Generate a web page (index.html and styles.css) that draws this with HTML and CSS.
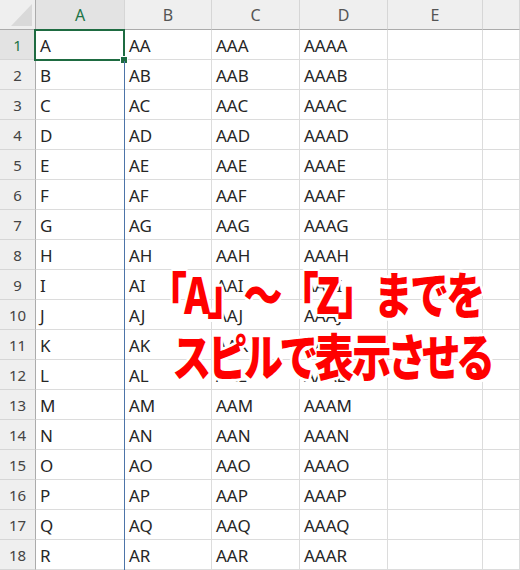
FILE: index.html
```html
<!DOCTYPE html>
<html lang="ja">
<head>
<meta charset="utf-8">
<link rel="stylesheet" href="styles.css">
</head>
<body>
<div class="sheet">
  <div class="grid">
    <div class="hd corner"><span class="tri"></span></div>
    <div class="hd col sel">A</div>
    <div class="hd col">B</div>
    <div class="hd col">C</div>
    <div class="hd col">D</div>
    <div class="hd col">E</div>
    <div class="hd col"></div>
  </div>
  <div class="grid" id="body"></div>
  <div class="selbox"><span class="handle"></span></div>
  <div class="spillline"></div>
  <div class="caption">
    <div class="line l1">「A」～「Z」までを</div>
    <div class="line l2">スピルで表示させる</div>
  </div>
</div>
<script>
  var body = document.getElementById('body');
  var letters = 'ABCDEFGHIJKLMNOPQR';
  var html = '';
  for (var i = 0; i < letters.length; i++) {
    var l = letters[i];
    html += '<div class="rh' + (i === 0 ? ' sel' : '') + '">' + (i + 1) + '</div>';
    html += '<div class="c">' + l + '</div>';
    html += '<div class="c">A' + l + '</div>';
    html += '<div class="c">AA' + l + '</div>';
    html += '<div class="c">AAA' + l + '</div>';
    html += '<div class="c"></div>';
    html += '<div class="c"></div>';
  }
  body.innerHTML = html;
</script>
</body>
</html>
```
FILE: styles.css
```css
html, body {
  margin: 0;
  padding: 0;
  background: #ffffff;
}
.sheet {
  position: relative;
  width: 520px;
  height: 570px;
  overflow: hidden;
  font-family: "Noto Sans", "Noto Sans CJK JP", sans-serif;
}
.grid {
  display: grid;
  grid-template-columns: 36px 89px 87px 88px 88px 95px 1fr;
  grid-auto-rows: 30px;
}
.hd {
  background: #efefef;
  border-right: 1px solid #d6d6d6;
  border-bottom: 1px solid #ababab;
  display: flex;
  align-items: center;
  justify-content: center;
  color: #555555;
  font-size: 16px;
}
.corner {
  position: relative;
  border-right-color: #ababab;
}
.tri {
  position: absolute;
  right: 3px;
  bottom: 3px;
  width: 0;
  height: 0;
  border-left: 21px solid transparent;
  border-bottom: 22px solid #d9d9d9;
}
.col.sel {
  color: #217346;
  background: #e3e3e3;
}
.rh {
  background: #efefef;
  border-right: 1px solid #ababab;
  border-bottom: 1px solid #d6d6d6;
  display: flex;
  align-items: center;
  justify-content: center;
  color: #444444;
  font-size: 15px;
}
.rh.sel {
  color: #217346;
  background: #e3e3e3;
}
.c {
  border-right: 1px solid #dcdcdc;
  border-bottom: 1px solid #dcdcdc;
  display: flex;
  align-items: center;
  padding-left: 4px;
  padding-top: 1px;
  color: #262626;
  font-size: 17px;
  font-weight: 400;
  white-space: nowrap;
}
.selbox {
  position: absolute;
  left: 34px;
  top: 29px;
  width: 87px;
  height: 28px;
  border: 2px solid #1e6b41;
}
.handle {
  position: absolute;
  right: -5px;
  bottom: -5px;
  width: 6px;
  height: 6px;
  background: #1e6b41;
  border: 1px solid #ffffff;
}
.spillline {
  position: absolute;
  left: 124px;
  top: 61px;
  width: 1px;
  height: 520px;
  background: #4d74a8;
}
.caption {
  position: absolute;
  left: 160px;
  top: 261px;
  width: 360px;
}
.line {
  font-family: "Noto Sans CJK JP", sans-serif;
  font-weight: 900;
  font-size: 50px;
  line-height: 62px;
  color: #ff0000;
  white-space: nowrap;
  transform-origin: left center;
  transform: scaleX(0.78);
  text-shadow:
    3px 0 0 #fff, -3px 0 0 #fff, 0 3px 0 #fff, 0 -3px 0 #fff,
    2px 2px 0 #fff, -2px 2px 0 #fff, 2px -2px 0 #fff, -2px -2px 0 #fff;
}
.l1 {
  margin-left: -12px;
  letter-spacing: -3.5px;
}
.l2 {
  margin-left: 14px;
  letter-spacing: -2px;
  font-feature-settings: "palt";
}
```
